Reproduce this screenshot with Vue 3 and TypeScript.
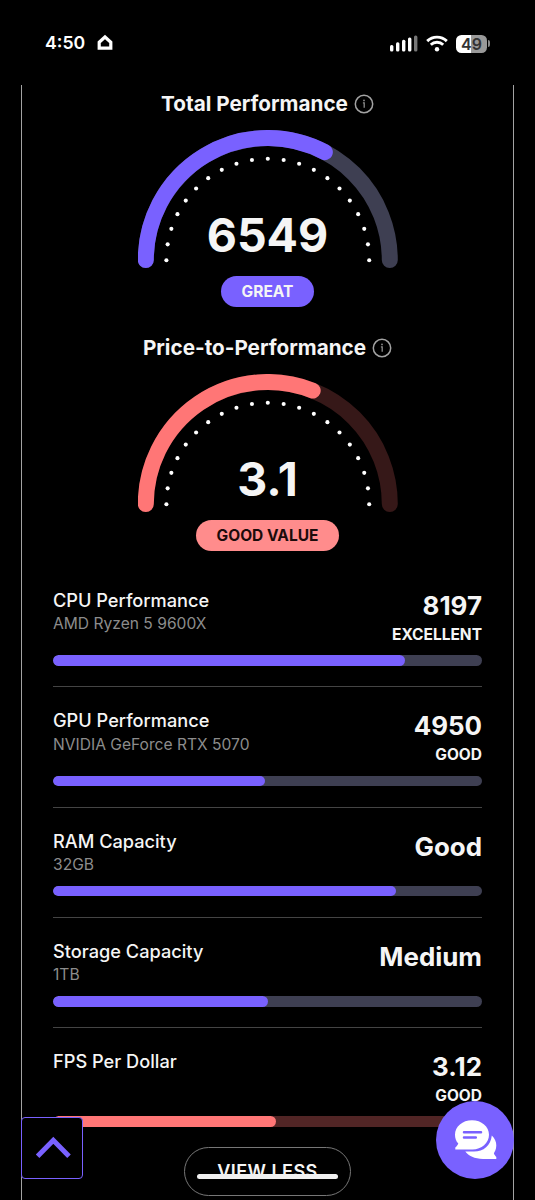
<script setup lang="ts">
interface Gauge {
  title: string
  value: string
  badge: string
  percent: number
  tone: 'violet' | 'coral'
}

interface Metric {
  label: string
  detail?: string
  value: string
  rating?: string
  percent: number
  tone: 'violet' | 'coral'
}

const gauges: Gauge[] = [
  { title: 'Total Performance', value: '6549', badge: 'GREAT', percent: 65.49, tone: 'violet' },
  { title: 'Price-to-Performance', value: '3.1', badge: 'GOOD VALUE', percent: 62, tone: 'coral' },
]

const metrics: Metric[] = [
  { label: 'CPU Performance', detail: 'AMD Ryzen 5 9600X', value: '8197', rating: 'EXCELLENT', percent: 82, tone: 'violet' },
  { label: 'GPU Performance', detail: 'NVIDIA GeForce RTX 5070', value: '4950', rating: 'GOOD', percent: 49.5, tone: 'violet' },
  { label: 'RAM Capacity', detail: '32GB', value: 'Good', percent: 80, tone: 'violet' },
  { label: 'Storage Capacity', detail: '1TB', value: 'Medium', percent: 50, tone: 'violet' },
  { label: 'FPS Per Dollar', value: '3.12', rating: 'GOOD', percent: 52, tone: 'coral' },
]

const CX = 129.8
const CY = 130
const R = 122

function arc(percent: number): string {
  const a = Math.PI * (1 - percent / 100)
  const x = CX + R * Math.cos(a)
  const y = CY - R * Math.sin(a)
  return `M${CX - R} ${CY}A${R} ${R} 0 0 1 ${x.toFixed(2)} ${y.toFixed(2)}`
}

const dots = Array.from({ length: 21 }, (_, i) => {
  const a = (Math.PI * i) / 20
  return { x: CX - 101.4 * Math.cos(a), y: CY + 0.2 - 101.4 * Math.sin(a) }
})
</script>

<template>
  <div class="screen">
    <header class="status">
      <div class="clock">
        <span>4:50</span>
        <svg width="16" height="17" viewBox="0 0 16 17">
          <path d="M8 3L13.800 8.200V14.200H2.200V8.200Z" fill="none" stroke="#fff" stroke-width="3.200" />
        </svg>
      </div>
      <div class="signals">
        <svg width="28" height="17" viewBox="0 0 28 17">
          <rect x="0" y="10" width="3.4" height="6.500" rx="1.5" fill="#fff" />
          <rect x="6" y="7.3" width="3.4" height="9.2" rx="1.5" fill="#fff" />
          <rect x="12" y="4.7" width="3.4" height="11.8" rx="1.5" fill="#fff" />
          <rect x="18" y="2.500" width="3.4" height="14" rx="1.5" fill="#fff" />
          <rect x="24" y="0.5" width="3.4" height="16" rx="1.5" fill="#777" />
        </svg>
        <svg class="wifi" width="22" height="17" viewBox="0 0 22 17">
          <g fill="none" stroke="#fff" stroke-width="2.9">
            <path d="M1.2 6.1A14 14 0 0 1 20.8 6.1" />
            <path d="M4.8 9.7A9 9 0 0 1 17.2 9.7" />
          </g>
          <circle cx="11" cy="14.3" r="2.2" fill="#fff" />
        </svg>
        <div class="battery"><span>49</span></div>
        <i class="nub"></i>
      </div>
    </header>

    <main class="card">
      <section v-for="g in gauges" :key="g.title" class="gauge" :class="g.tone">
        <h2>
          {{ g.title }}
          <svg width="20" height="20" viewBox="0 0 20 20">
            <circle cx="10" cy="10" r="8.700" fill="none" stroke="#a3a3a3" stroke-width="1.5" />
            <path d="M8.900 8.800h1.300v4.900" fill="none" stroke="#8c8c8c" stroke-width="1.300" />
            <circle cx="10" cy="6.400" r="0.900" fill="#8c8c8c" />
          </svg>
        </h2>
        <div class="dial">
          <svg width="260" height="138" viewBox="0 0 260 138">
            <g fill="none" stroke-width="16" stroke-linecap="round">
              <path class="rail" :d="arc(100)" />
              <path class="fill" :d="arc(g.percent)" />
            </g>
            <circle v-for="(d, i) in dots" :key="i" :cx="d.x" :cy="d.y" r="2.05" fill="#fff" />
          </svg>
          <strong>{{ g.value }}</strong>
        </div>
        <span class="badge">{{ g.badge }}</span>
      </section>

      <section class="metrics">
        <div v-for="m in metrics" :key="m.label" class="row" :class="[m.tone, { tall: m.rating }]">
          <div class="info">
            <div>
              <div class="label">{{ m.label }}</div>
              <div v-if="m.detail" class="detail">{{ m.detail }}</div>
            </div>
            <div class="score">
              <div class="value">{{ m.value }}</div>
              <div v-if="m.rating" class="rating">{{ m.rating }}</div>
            </div>
          </div>
          <div class="track"><div class="bar" :style="{ width: m.percent + '%' }"></div></div>
        </div>
      </section>
      <button class="less">VIEW LESS</button>
    </main>

    <button class="top">
      <svg width="62" height="62" viewBox="0 0 62 62">
        <path d="M16.6 39.200L32.300 23.300L48 39.200" fill="none" stroke="#7961ff" stroke-width="5" />
      </svg>
    </button>
    <button class="chat">
      <svg width="78" height="78" viewBox="0 0 78 78">
        <path d="M55.8 34.5C58.8 37.5 60.3 40.5 60.3 44.5C60.3 48.5 58.5 51 57.9 52.3C58.3 54 59.5 55 60.3 56V57.9H47C38.5 57.9 32.5 55 29.3 50.6H38C47.5 50.6 54.8 44.5 55.8 34.5Z" fill="#fff" />
        <path d="M36 19.3C45.5 19.3 53 25.5 53 33.7C53 42 45.5 48.4 36.5 48.4H19.3V46.5C20.5 45.5 21.6 44.5 22.3 42.6C20 40 19 37 19 33.7C19 25.5 26.5 19.3 36 19.3Z" fill="#fff" />
        <path d="M28 31.3H45M28 36.6H39.8" stroke="#7961ff" stroke-width="2.5" stroke-linecap="round" />
      </svg>
    </button>
    <div class="home"></div>
  </div>
</template>

<style>
html, body { background: #000; overflow: hidden; }
</style>

<style scoped>
.screen {
  position: relative;
  width: 535px;
  height: 1200px;
  overflow: hidden;
  background: #000;
  color: #f5f5f5;
  font-family: Inter, "Liberation Sans", sans-serif;
}
.status {
  height: 85px;
  box-sizing: border-box;
  padding: 0 45px;
  display: flex;
  justify-content: space-between;
  align-items: center;
}
.clock { display: flex; align-items: center; gap: 12px; font-size: 17.7px; font-weight: 600; color: #fff; }
.signals { display: flex; align-items: center; padding-top: 2px; }
.wifi { margin-left: 8px; }
.battery {
  margin-left: 8px;
  width: 31px;
  height: 18px;
  border-radius: 5.5px;
  background: linear-gradient(90deg, #fff 49%, #999 49%);
  color: #333;
  font-size: 16px;
  line-height: 18px;
  font-weight: 600;
  text-align: center;
}
.nub { width: 2px; height: 7px; margin-left: 1px; border-radius: 0 2px 2px 0; background: #888; }
.card {
  width: 493px;
  height: 1160px;
  box-sizing: border-box;
  margin-left: 21px;
  border: solid #a3a3a3;
  border-width: 0 1px;
  padding: 5px 31px 0;
  display: flex;
  flex-direction: column;
  align-items: center;
}
.gauge { height: 244.2px; display: flex; flex-direction: column; align-items: center; flex: none; }
.gauge h2 {
  margin: 0;
  height: 28px;
  display: flex;
  align-items: center;
  gap: 6px;
  font-size: 20.7px;
  font-weight: 700;
  line-height: 28px;
}
.dial { position: relative; margin-top: 12px; height: 138px; }
.dial svg { display: block; }
.dial strong {
  position: absolute;
  left: 0;
  right: 0;
  top: 76.5px;
  text-align: center;
  font-size: 46.5px;
  line-height: 56px;
  font-weight: 700;
}
.violet .rail { stroke: #3e3f52; }
.violet .fill { stroke: #7961ff; }
.coral .rail { stroke: #361818; }
.coral .fill { stroke: #ff7676; }
.badge {
  margin-top: 8px;
  height: 31px;
  padding: 0 20.7px;
  border-radius: 16px;
  background: #7961ff;
  font-size: 15.5px;
  font-weight: 700;
  line-height: 31px;
}
.coral .badge { background: #ff8c8c; color: #1c0b0b; }
.metrics { width: 100%; flex: none; }
.row {
  box-sizing: border-box;
  height: 110.2px;
  padding: 20px 0 20.6px;
  border-bottom: 1px solid #444;
  display: flex;
  flex-direction: column;
  justify-content: space-between;
}
.row.tall { height: 120.5px; }
.row:last-child { border-bottom: 0; height: 119px; }
.row:first-child { height: 109px; padding-top: 8.5px; }
.info { display: flex; justify-content: space-between; }
.label { margin-top: 1px; font-size: 18.2px; line-height: 24px; font-weight: 500; }
.detail { margin-top: 1.2px; font-size: 15.6px; line-height: 22px; color: #8c8c8c; }
.score { text-align: right; }
.value { font-size: 25.9px; line-height: 38px; font-weight: 700; }
.rating { font-size: 15.5px; line-height: 19px; font-weight: 700; }
.track { height: 10.4px; border-radius: 6px; background: #3e3f52; flex: none; overflow: hidden; }
.coral .track { background: #512525; }
.bar { height: 100%; border-radius: 6px; background: #7961ff; }
.coral .bar { background: #ff7676; }
button { margin: 0; padding: 0; font-family: inherit; color: inherit; background: none; }
.less {
  flex: none;
  width: 167px;
  height: 49px;
  padding-bottom: 2px;
  border: 1px solid #777;
  border-radius: 25px;
  font-size: 18.1px;
  font-weight: 600;
  letter-spacing: 0.4px;
}
.top {
  position: absolute;
  left: 21px;
  top: 1117px;
  width: 62px;
  height: 62px;
  border: 1px solid #7961ff;
  border-radius: 4px;
  background: #000;
}
.top svg { display: block; margin: -1px; }
.chat {
  position: absolute;
  left: 436px;
  top: 1101px;
  width: 78px;
  height: 78px;
  border: 0;
  border-radius: 50%;
  background: #7961ff;
}
.chat svg { display: block; }
.home {
  position: absolute;
  left: 197px;
  top: 1174px;
  width: 141px;
  height: 5px;
  border-radius: 3px;
  background: #f0f0f0;
}
</style>
